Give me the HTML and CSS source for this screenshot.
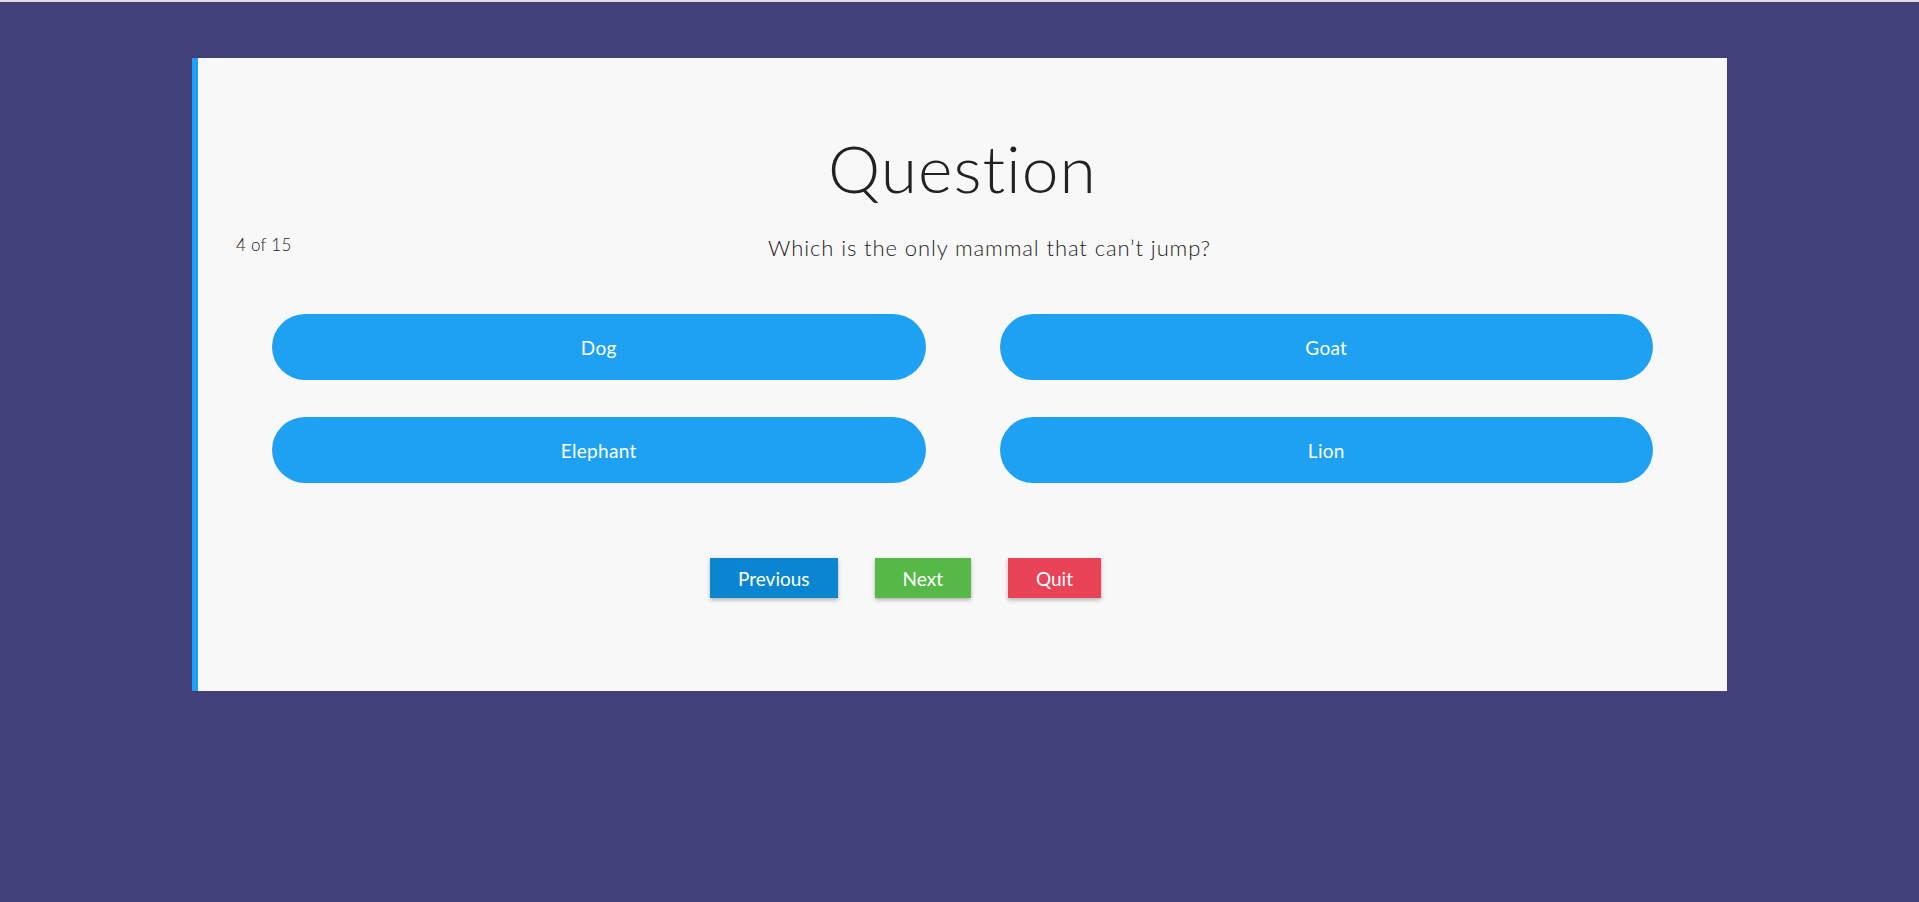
FILE: index.html
```html
<!DOCTYPE html>
<html lang="en">
<head>
<meta charset="utf-8">
<title>Quiz</title>
<link rel="stylesheet" href="styles.css">
</head>
<body>
<main class="card">
  <h1 class="title">Question</h1>
  <div class="meta">
    <p class="counter">4 of 15</p>
    <p class="question">Which is the only mammal that can’t jump?</p>
  </div>
  <div class="answers">
    <button class="answer">Dog</button>
    <button class="answer">Goat</button>
    <button class="answer">Elephant</button>
    <button class="answer">Lion</button>
  </div>
  <div class="nav">
    <button class="nav-btn prev">Previous</button>
    <button class="nav-btn next">Next</button>
    <button class="nav-btn quit">Quit</button>
  </div>
</main>
</body>
</html>
```

FILE: styles.css
```css
html, body {
  margin: 0;
  padding: 0;
}
body {
  background: #41407a;
  border-top: 2px solid #dedede;
  min-height: 900px;
  font-family: Lato, "Open Sans", sans-serif;
  color: #262626;
}
.card {
  box-sizing: border-box;
  width: 80%;
  margin: 56px auto 0;
  background: #f8f8f8;
  border-left: 6px solid #1da1f2;
  padding: 70px 38px 93px;
}
.title {
  margin: 0;
  text-align: center;
  font-size: 66px;
  font-weight: 300;
  letter-spacing: 1px;
  line-height: 1.2;
  color: #222;
}
.meta {
  display: flex;
  align-items: flex-start;
  margin-top: 24px;
}
.counter {
  flex: none;
  width: 54px;
  margin: 0;
  white-space: nowrap;
  font-size: 17px;
  font-weight: 300;
  letter-spacing: 0.3px;
  line-height: 28px;
  color: #222;
}
.question {
  flex: 1;
  margin: 0;
  text-align: center;
  font-size: 22px;
  font-weight: 300;
  letter-spacing: 0.9px;
  line-height: 33px;
  color: #1e1e1e;
}
.answers {
  display: grid;
  grid-template-columns: 1fr 1fr;
  column-gap: 74px;
  row-gap: 37px;
  padding: 0 36px;
  margin-top: 50px;
}
.answer {
  height: 66px;
  border: none;
  border-radius: 33px;
  background: #1ea1f2;
  color: #fff;
  font-family: inherit;
  font-size: 19px;
  letter-spacing: 0.3px;
  cursor: pointer;
}
.nav {
  display: flex;
  justify-content: center;
  gap: 37px;
  margin-top: 75px;
  padding-right: 114px;
}
.nav-btn {
  height: 40px;
  padding: 0 28px;
  border: none;
  color: #fff;
  font-family: inherit;
  font-size: 19px;
  box-shadow: 0 2px 4px rgba(0, 0, 0, 0.28);
  cursor: pointer;
}
.prev { background: #0a85d0; }
.next { background: #56b947; }
.quit { background: #e94358; }
```
